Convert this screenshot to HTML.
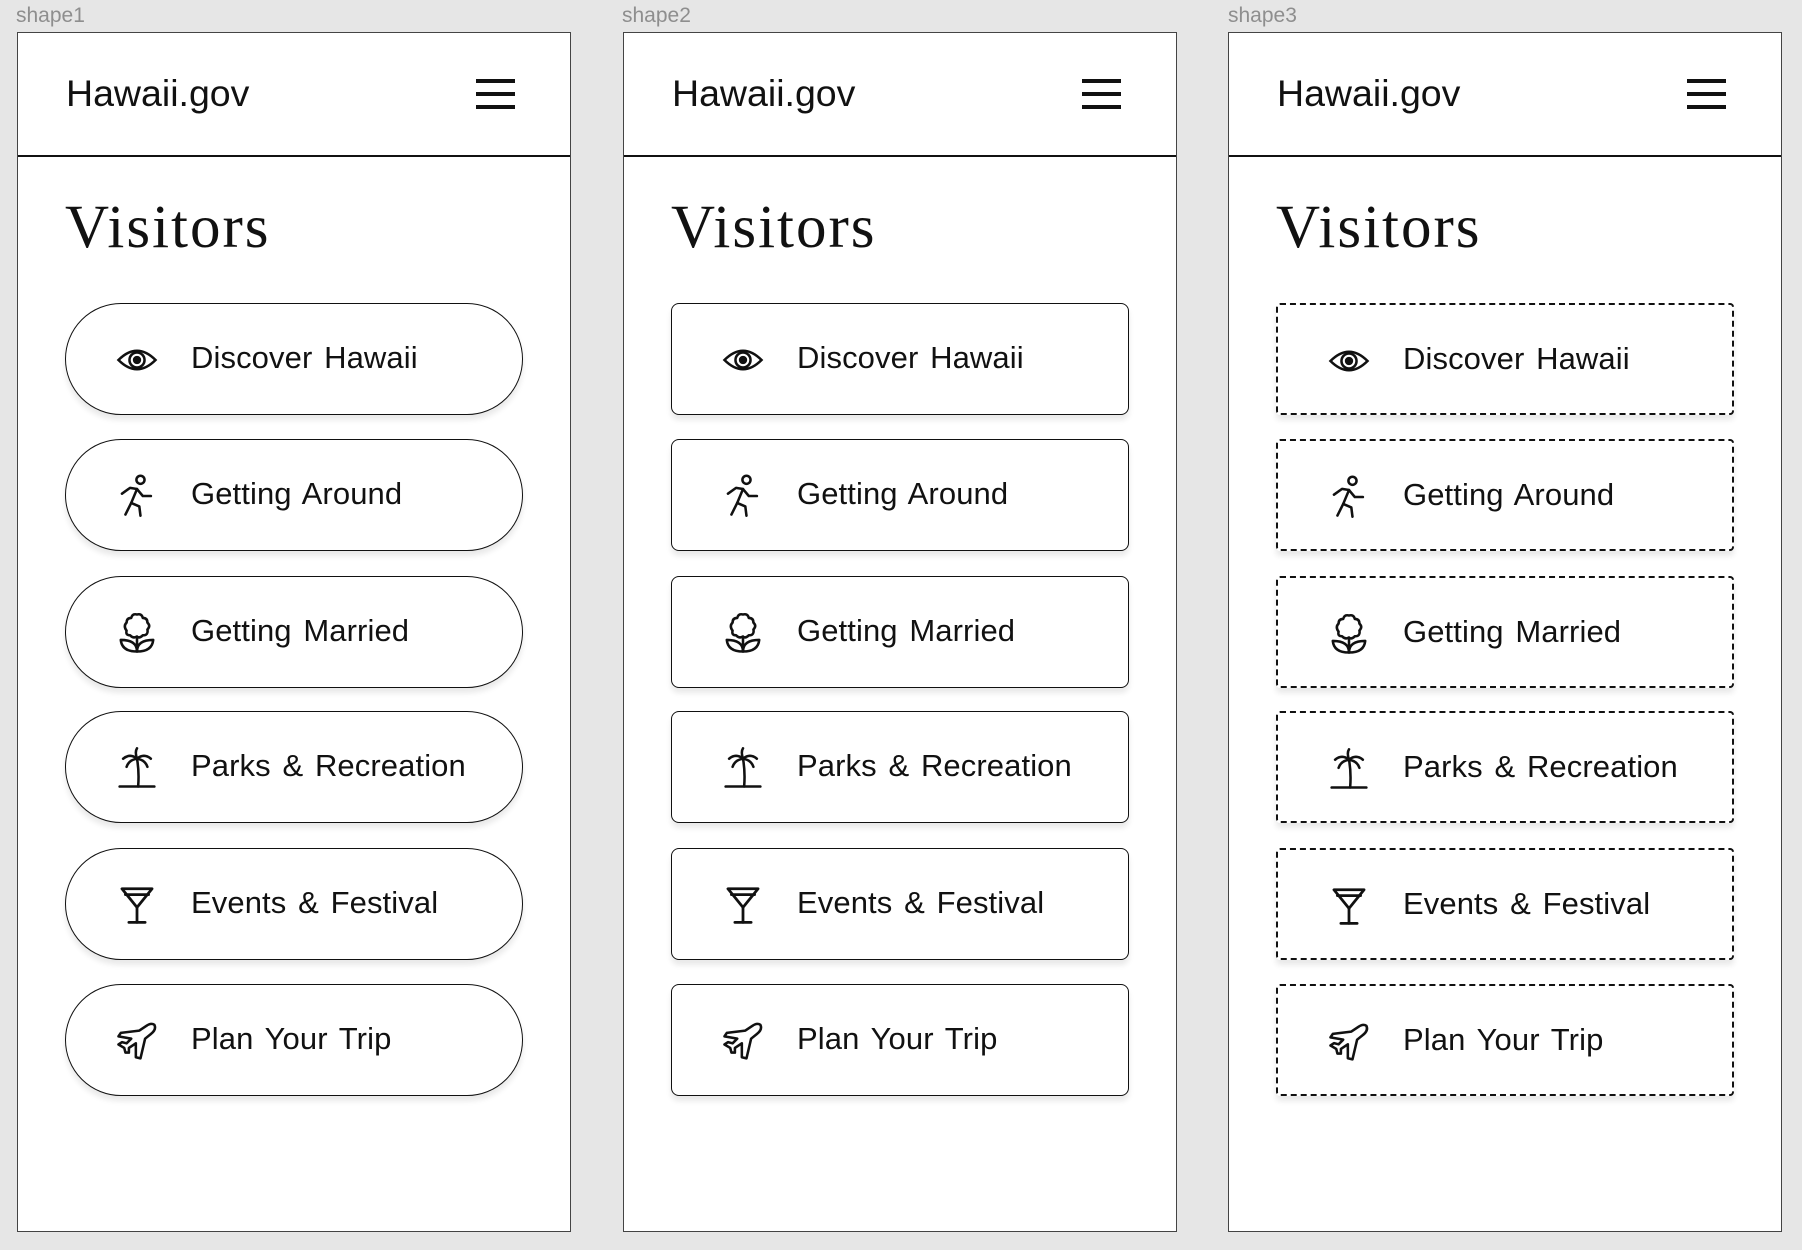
<!DOCTYPE html>
<html><head><meta charset="utf-8"><style>
*{box-sizing:border-box;margin:0;padding:0}
body{width:1802px;height:1250px;background:#e6e6e6;position:relative;overflow:hidden;font-family:"Liberation Sans","Noto Sans CJK KR",sans-serif}
.lbl{position:absolute;top:4px;font-size:21px;color:#8e8e8e}
.frame{position:absolute;top:32px;width:554px;height:1200px;background:#fff;border:1.5px solid #444}
.hdr{position:absolute;left:0;top:0;right:0;height:124px;border-bottom:2.5px solid #111}
.logo{position:absolute;left:48px;top:39px;font-size:37.5px;color:#111}
.ham{position:absolute;left:458px;top:46px;width:39px}
.ham i{display:block;height:4px;background:#111;margin-bottom:9px}
.title{position:absolute;left:47px;top:160px;font-family:"Liberation Serif",serif;font-size:61px;color:#111;letter-spacing:2px}
.btn{position:absolute;left:47px;width:458px;height:112px;border:1.5px solid #111;background:#fff;box-shadow:0 5px 6px rgba(0,0,0,0.09)}
.f1 .btn{border-radius:56px}
.f2 .btn{border-radius:8px}
.f3 .btn{border:2.5px dashed #111;border-radius:4px}
.btn svg{position:absolute;left:49px;top:34px;width:44px;height:44px}
.btn span{position:absolute;left:125px;top:36px;font-size:31px;color:#111;letter-spacing:0.1px;word-spacing:3px}
</style></head><body>
<div class="lbl" style="left:16px">shape1</div>
<div class="lbl" style="left:622px">shape2</div>
<div class="lbl" style="left:1228px">shape3</div>

<svg width="0" height="0" style="position:absolute">
<defs>
<g id="eye" fill="none" stroke="#111" stroke-width="2.2"><path d="M3 19 Q19 3 35 19 Q19 35 3 19Z"/><circle cx="19" cy="19" r="6.5"/><circle cx="19" cy="19" r="2.5" fill="#111"/></g>
<g id="walk" fill="none" stroke="#111" stroke-width="2.2" stroke-linecap="round" stroke-linejoin="round"><circle cx="22" cy="5" r="3.5"/><path d="M6 17 L13 12 L19 13 L24 19 L31 19"/><path d="M19 13 L14 25 L9 35"/><path d="M14 25 L21 28 L22 36"/></g>
<g id="flower" fill="none" stroke="#111" stroke-width="2.2" stroke-linejoin="round"><path d="M19 3 Q23 2 24 6 Q28 6 28 10 Q31 13 28 16 Q29 21 24 21 Q21 24 19 22 Q16 24 13 21 Q9 21 10 17 Q7 13 10 10 Q10 6 14 6 Q15 2 19 3Z"/><path d="M19 22 V35"/><path d="M19 35 Q19 25 5 25 Q6 35 19 35Z"/><path d="M19 35 Q19 25 33 25 Q32 35 19 35Z"/></g>
<g id="palm" fill="none" stroke="#111" stroke-width="2.2" stroke-linecap="round"><path d="M4 35 H34"/><path d="M19 11 Q21 22 20 35"/><path d="M19 11 Q13 6 7 11"/><path d="M19 11 Q25 6 31 11"/><path d="M19 11 Q12 12 10 18"/><path d="M19 11 Q26 12 28 18"/><path d="M19 11 Q17 5 19 2"/></g>
<g id="glass" fill="none" stroke="#111" stroke-width="2.4" stroke-linecap="round" stroke-linejoin="round"><path d="M6 5 H32 L19 21 Z"/><path d="M9 10 H29"/><path d="M19 21 V34"/><path d="M12 34 H26"/></g>
<g id="plane" fill="none" stroke="#111" stroke-width="2.2" stroke-linejoin="round"><path d="M34 5 Q36 9 31 13 L26 17 L22 34 L18 33 L18 21 L12 25 L12 29 L9 29 L8 25 L3 22 L6 20 L10 21 L14 17 L3 15 L5 12 L21 10 L27 6 Q31 3 34 5Z"/></g>
</defs></svg>

<div class="frame f1" style="left:17px">
<div class="hdr"><div class="logo">Hawaii.gov</div><div class="ham"><i></i><i></i><i></i></div></div>
<div class="title">Visitors</div>
<div class="btn" style="top:270px"><svg viewBox="0 0 38 38"><use href="#eye"/></svg><span>Discover Hawaii</span></div>
<div class="btn" style="top:406px"><svg viewBox="0 0 38 38"><use href="#walk"/></svg><span>Getting Around</span></div>
<div class="btn" style="top:543px"><svg viewBox="0 0 38 38"><use href="#flower"/></svg><span>Getting Married</span></div>
<div class="btn" style="top:678px"><svg viewBox="0 0 38 38"><use href="#palm"/></svg><span>Parks &amp; Recreation</span></div>
<div class="btn" style="top:815px"><svg viewBox="0 0 38 38"><use href="#glass"/></svg><span>Events &amp; Festival</span></div>
<div class="btn" style="top:951px"><svg viewBox="0 0 38 38"><use href="#plane"/></svg><span>Plan Your Trip</span></div>
</div>

<div class="frame f2" style="left:623px">
<div class="hdr"><div class="logo">Hawaii.gov</div><div class="ham"><i></i><i></i><i></i></div></div>
<div class="title">Visitors</div>
<div class="btn" style="top:270px"><svg viewBox="0 0 38 38"><use href="#eye"/></svg><span>Discover Hawaii</span></div>
<div class="btn" style="top:406px"><svg viewBox="0 0 38 38"><use href="#walk"/></svg><span>Getting Around</span></div>
<div class="btn" style="top:543px"><svg viewBox="0 0 38 38"><use href="#flower"/></svg><span>Getting Married</span></div>
<div class="btn" style="top:678px"><svg viewBox="0 0 38 38"><use href="#palm"/></svg><span>Parks &amp; Recreation</span></div>
<div class="btn" style="top:815px"><svg viewBox="0 0 38 38"><use href="#glass"/></svg><span>Events &amp; Festival</span></div>
<div class="btn" style="top:951px"><svg viewBox="0 0 38 38"><use href="#plane"/></svg><span>Plan Your Trip</span></div>
</div>

<div class="frame f3" style="left:1228px">
<div class="hdr"><div class="logo">Hawaii.gov</div><div class="ham"><i></i><i></i><i></i></div></div>
<div class="title">Visitors</div>
<div class="btn" style="top:270px"><svg viewBox="0 0 38 38"><use href="#eye"/></svg><span>Discover Hawaii</span></div>
<div class="btn" style="top:406px"><svg viewBox="0 0 38 38"><use href="#walk"/></svg><span>Getting Around</span></div>
<div class="btn" style="top:543px"><svg viewBox="0 0 38 38"><use href="#flower"/></svg><span>Getting Married</span></div>
<div class="btn" style="top:678px"><svg viewBox="0 0 38 38"><use href="#palm"/></svg><span>Parks &amp; Recreation</span></div>
<div class="btn" style="top:815px"><svg viewBox="0 0 38 38"><use href="#glass"/></svg><span>Events &amp; Festival</span></div>
<div class="btn" style="top:951px"><svg viewBox="0 0 38 38"><use href="#plane"/></svg><span>Plan Your Trip</span></div>
</div>
</body></html>
